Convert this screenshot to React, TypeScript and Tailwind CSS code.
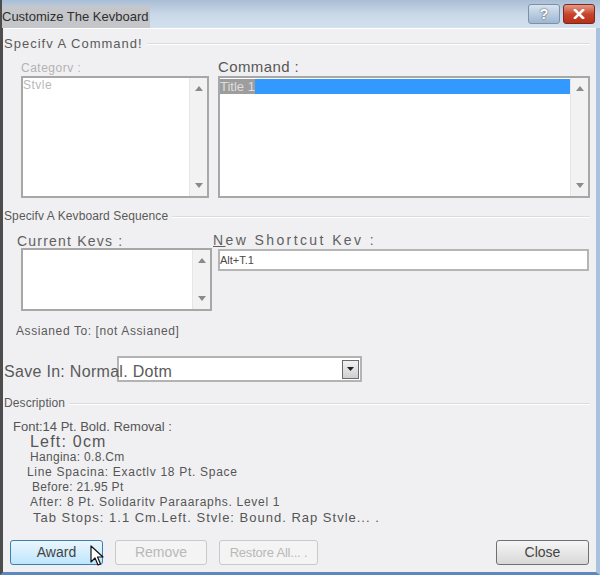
import React from "react";

function Arrow({ up }: { up?: boolean }) {
  return (
    <svg width="8" height="5" viewBox="0 0 8 5">
      <path d={up ? "M0 5 L4 0 L8 5 Z" : "M0 0 L8 0 L4 5 Z"} fill="#8a8a8a" />
    </svg>
  );
}

function ScrollBar() {
  return (
    <div className="flex w-[18px] flex-col items-center justify-between border-l border-[#e6e6e6] bg-[#f2f2f2] py-[8px]">
      <Arrow up />
      <Arrow />
    </div>
  );
}

function SectionHead({ text, big }: { text: string; big?: boolean }) {
  return (
    <div className="flex items-center gap-1 pr-[6px]">
      <span
        className={
          big
            ? "text-[13px] leading-[15px] tracking-[1px] text-[#5a5a5a]"
            : "text-[12px] leading-[15px] tracking-[0.1px] text-[#5a5a5a]"
        }
      >
        {text}
      </span>
      <div className="h-[2px] flex-1 border-t border-b border-t-[#dcdcdc] border-b-white" />
    </div>
  );
}

function Btn({ label, kind, w }: { label: string; kind: "hot" | "off" | "normal"; w: string }) {
  const cls =
    kind === "hot"
      ? "border-[#3c7fb1] bg-gradient-to-b from-[#eaf6fd] to-[#bee6fd] text-[#444]"
      : kind === "off"
        ? "border-[#c9c9c9] bg-[#f4f4f4] text-[#b8b8b8]"
        : "border-[#707070] bg-gradient-to-b from-[#f6f6f6] to-[#d8d8d8] text-[#444]";
  return (
    <div className={`flex h-[25px] items-center justify-center rounded-[3px] border text-[14px] ${w} ${cls}`}>
      {label}
    </div>
  );
}

export default function App() {
  return (
    <div className="flex h-[575px] w-[600px] flex-col overflow-hidden bg-[#5d88bd] font-['Liberation_Sans',Arial,sans-serif]">
      {/* TITLE BAR */}
      <div className="flex h-[28px] shrink-0 items-center justify-between border-l-2 border-[#4d4d4d] bg-gradient-to-b from-[#a9bdd4] via-[#c9d8e8] to-[#d3e0ee] pr-[5px]">
        <div className="flex h-[22px] items-center self-end bg-[#c4c6c9] pr-[2px] text-[13px] text-[#2f2f2f]">
          Customize The Kevboard
        </div>
        <div className="flex gap-[3px]">
          <div className="flex h-[20px] w-[32px] items-center justify-center rounded-[3px] border border-[#7d90a8] bg-gradient-to-b from-[#d7e3f0] to-[#9fb7d2] text-[14px] font-bold text-white [text-shadow:0_0_2px_#333]">
            ?
          </div>
          <div className="flex h-[20px] w-[32px] items-center justify-center rounded-[3px] border border-[#7a2a1c] bg-gradient-to-b from-[#e49a86] via-[#c8452d] to-[#b8301a]">
            <svg width="12" height="10" viewBox="0 0 12 10">
              <path d="M2 1 L10 9 M10 1 L2 9" stroke="white" strokeWidth="2.6" strokeLinecap="square" />
            </svg>
          </div>
        </div>
      </div>

      {/* BODY */}
      <div className="relative flex flex-1 flex-col border-l-[3px] border-r-[4px] border-b-[3px] border-l-[#4d4d4d] border-r-[#a9c3de] border-b-[#5d88bd] bg-[#f0f0f2] pl-[1px]">
        <div className="h-px bg-white" />
        <div className="mt-[7px]">
          <SectionHead text="Specifv A Command!" big />
        </div>

        {/* command lists */}
        <div className="mt-[8px] flex gap-[9px] pl-[17px]">
          <div className="flex w-[188px] flex-col">
            <div className="h-[17px] text-[12px] tracking-[0.5px] text-[#b3b3b3]">Categorv :</div>
            <div className="flex h-[122px] border-2 border-[#a7a7a7] bg-white">
              <div className="flex-1 text-[12px] leading-[14px] tracking-[0.5px] text-[#b8b8b8]">Stvle</div>
              <ScrollBar />
            </div>
          </div>
          <div className="flex w-[372px] flex-col">
            <div className="-mt-[3px] h-[20px] text-[15px] tracking-[0.4px] text-[#575757]">Command :</div>
            <div className="flex h-[122px] border-2 border-[#a7a7a7] bg-white">
              <div className="flex-1 pt-[1px]">
                <div className="flex h-[15px] items-center bg-[#3399ff]">
                  <span className="bg-[#9d9d9d] text-[13px] leading-[15px] text-[#dedede]">Title 1</span>
                </div>
              </div>
              <ScrollBar />
            </div>
          </div>
        </div>

        <div className="mt-[11px]">
          <SectionHead text="Specifv A Kevboard Sequence" />
        </div>

        {/* keyboard sequence */}
        <div className="mt-[10px] flex gap-[1px] pl-[13px]">
          <div className="flex w-[195px] flex-col">
            <div className="h-[14px] text-[14px] leading-[14px] tracking-[1.2px] text-[#606060]">Current Kevs :</div>
            <div className="ml-[4px] flex h-[63px] border-2 border-[#a7a7a7] bg-white">
              <div className="flex-1" />
              <ScrollBar />
            </div>
          </div>
          <div className="flex w-[376px] flex-col">
            <div className="-mt-[1px] h-[16px] text-[14px] leading-[14px] tracking-[2.4px] text-[#606060]">
              <span className="underline">N</span>ew Shortcut Kev :
            </div>
            <div className="ml-[5px] flex h-[22px] items-center border-2 border-[#b5b5b5] bg-white text-[11px] text-[#4a4a4a]">
              Alt+T.1
            </div>
          </div>
        </div>

        <div className="mt-[13px] pl-[12px] text-[12px] leading-[14px] tracking-[0.6px] text-[#5a5a5a]">
          Assianed To: [not Assianed]
        </div>

        {/* save in */}
        <div className="relative mt-[18px] flex h-[26px] pl-[113px]">
          <div className="flex w-[245px] items-center justify-end border-2 border-[#b3b3b3] bg-white pr-[1px]">
            <div className="flex h-[19px] w-[17px] items-center justify-center border border-[#6b6b6b] bg-gradient-to-b from-[#f2f2f2] to-[#cfcfcf]">
              <svg width="7" height="4" viewBox="0 0 7 4">
                <path d="M0 0 L7 0 L3.5 4 Z" fill="#222" />
              </svg>
            </div>
          </div>
          <div className="absolute left-0 top-[4px] text-[16px] tracking-[0.3px] text-[#5a5a5a]">Save In: Normal. Dotm</div>
        </div>

        <div className="mt-[14px]">
          <SectionHead text="Description" />
        </div>

        {/* description */}
        <div className="mt-[8px] flex flex-col text-[12px] tracking-[0.3px] text-[#555]">
          <div className="h-[15px] pl-[9px] text-[13px] leading-[15px] tracking-[0px]">Font:14 Pt. Bold. Removal :</div>
          <div className="h-[16px] pl-[26px] text-[16px] leading-[16px] tracking-[1.2px]">Left: 0cm</div>
          <div className="h-[15px] pl-[26px] leading-[15px]">Hangina: 0.8.Cm</div>
          <div className="h-[15px] pl-[23px] leading-[15px] tracking-[0.7px]">Line Spacina: Exactlv 18 Pt. Space</div>
          <div className="h-[15px] pl-[28px] leading-[15px]">Before: 21.95 Pt</div>
          <div className="h-[15px] pl-[26px] leading-[15px] tracking-[0.7px]">After: 8 Pt. Solidaritv Paraaraphs. Level 1</div>
          <div className="h-[15px] pl-[29px] text-[13px] leading-[15px] tracking-[1px]">
            Tab Stops: 1.1 Cm.Left. Stvle: Bound. Rap Stvle... .
          </div>
        </div>

        {/* buttons */}
        <div className="mt-auto mb-[7px] flex items-center pl-[6px] pr-[7px]">
          <Btn label="Award" kind="hot" w="w-[93px]" />
          <div className="ml-[12px]">
            <Btn label="Remove" kind="off" w="w-[92px]" />
          </div>
          <div className="ml-[12px]">
            <div className="flex h-[25px] w-[99px] items-center justify-center rounded-[3px] border border-[#c9c9c9] bg-[#f4f4f4] text-[13px] tracking-[-0.2px] text-[#b8b8b8]">
              Restore All... .
            </div>
          </div>
          <div className="ml-auto">
            <Btn label="Close" kind="normal" w="w-[93px]" />
          </div>
        </div>

        {/* mouse cursor */}
        <svg className="absolute left-[87px] top-[517px]" width="14" height="22" viewBox="0 0 14 22">
          <path d="M1 1 L1 17 L5 13 L8 20 L10.5 19 L7.5 12 L13 12 Z" fill="white" stroke="#111" strokeWidth="1.2" strokeLinejoin="round" />
        </svg>
      </div>
    </div>
  );
}
